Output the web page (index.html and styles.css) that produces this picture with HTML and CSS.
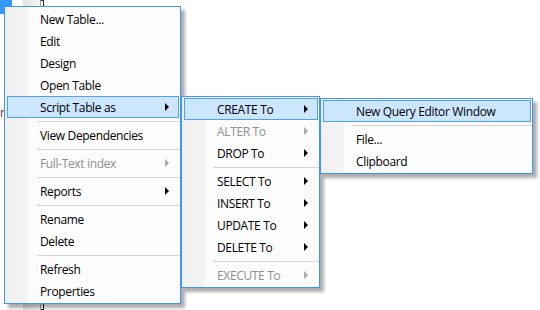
FILE: index.html
```html
<!DOCTYPE html>
<html lang="en">
<head>
  <meta charset="UTF-8" />
  <title>Script Table as</title>
  <link rel="stylesheet" href="styles.css">
</head>
<body>

  <div class="desk">
    <!-- object explorer behind the menus -->
    <div class="tree-node"></div>
    <div class="tree-rail"></div>
    <span class="tree-text">r</span>

    <ul class="menu menu-main">
      <li class="item">New Table...</li>
      <li class="item">Edit</li>
      <li class="item">Design</li>
      <li class="item">Open Table</li>
      <li class="item active">Script Table as<span class="arrow"></span></li>
      <li class="sep"></li>
      <li class="item">View Dependencies</li>
      <li class="sep"></li>
      <li class="item disabled">Full-Text index<span class="arrow"></span></li>
      <li class="sep"></li>
      <li class="item">Reports<span class="arrow"></span></li>
      <li class="sep"></li>
      <li class="item">Rename</li>
      <li class="item">Delete</li>
      <li class="sep"></li>
      <li class="item">Refresh</li>
      <li class="item">Properties</li>
    </ul>

    <ul class="menu menu-script">
      <li class="item active">CREATE To<span class="arrow"></span></li>
      <li class="item disabled">ALTER To<span class="arrow"></span></li>
      <li class="item">DROP To<span class="arrow"></span></li>
      <li class="sep"></li>
      <li class="item">SELECT To<span class="arrow"></span></li>
      <li class="item">INSERT To<span class="arrow"></span></li>
      <li class="item">UPDATE To<span class="arrow"></span></li>
      <li class="item">DELETE To<span class="arrow"></span></li>
      <li class="sep"></li>
      <li class="item disabled">EXECUTE To<span class="arrow"></span></li>
    </ul>

    <ul class="menu menu-create">
      <li class="item active">New Query Editor Window</li>
      <li class="sep"></li>
      <li class="item">File...</li>
      <li class="item">Clipboard</li>
    </ul>
  </div>

</body>
</html>
```

FILE: styles.css
```css
body {
  margin: 0;
  background: #fff;
  font-family: 'Open Sans', 'Noto Sans', sans-serif;
  font-size: 12px;
  color: #000;
}

.desk {
  position: relative;
  width: 540px;
  height: 310px;
  overflow: hidden;
}

.tree-node {
  position: absolute;
  left: 0;
  top: 0;
  width: 12px;
  height: 14px;
  background: #3399ff;
}

.tree-rail {
  position: absolute;
  left: 23px;
  top: 0;
  width: 17px;
  height: 310px;
  background: linear-gradient(to right, #e2e2e2, #f6f6f6);
  border-right: 1px solid #9a9a9a;
  box-shadow: 3px 0 0 -1px #fff, 3px 0 0 0 #2a2a2a;
}

.tree-text {
  position: absolute;
  left: 0;
  top: 104px;
  color: #6e1f3e;
  font-size: 12px;
}

.menu {
  position: absolute;
  margin: 0;
  padding: 1px 0;
  list-style: none;
  border: 1px solid #3e97f2;
  background: linear-gradient(to right, #efefef 0, #f4f4f4 22px, #fcfcfc 24px);
  box-shadow: 4px 4px 3px rgba(0, 0, 0, 0.32);
  letter-spacing: -0.35px;
}

.menu-main {
  left: 4px;
  top: 6px;
  width: 175px;
}

.menu-script {
  left: 181px;
  top: 96px;
  width: 137px;
}

.menu-create {
  left: 320px;
  top: 98px;
  width: 211px;
}

.item {
  display: flex;
  align-items: center;
  box-sizing: border-box;
  height: 22px;
  margin: 0 1px 0 2px;
  padding-left: 32px;
  border: 1px solid transparent;
  white-space: nowrap;
}

.item.active {
  background: #cce6ff;
  border-color: #4da0f2;
}

.item.disabled {
  color: #8f8f8f;
}

.arrow {
  margin-left: auto;
  margin-right: 9px;
  width: 0;
  height: 0;
  border-left: 4px solid #000;
  border-top: 4px solid transparent;
  border-bottom: 4px solid transparent;
}

.disabled .arrow {
  border-left-color: #a8a8a8;
}

.sep {
  height: 1px;
  margin: 3px 0 2px 32px;
  background: #d5d5d5;
}

.menu-script .sep,
.menu-create .sep {
  margin-left: 31px;
}
```
